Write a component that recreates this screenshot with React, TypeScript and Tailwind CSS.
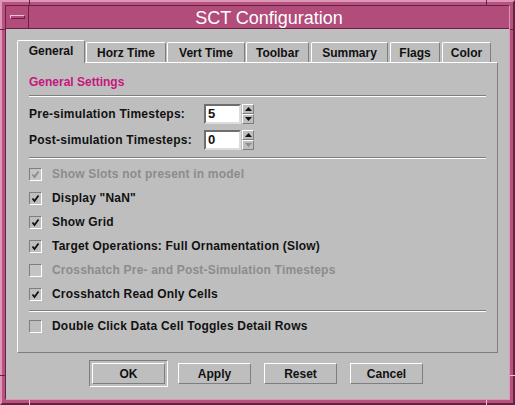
import React from "react";

const tabs = [
  { label: "General", w: "w-[68px]", ml: "" },
  { label: "Horz Time", w: "w-[80px]", ml: "ml-[1px]" },
  { label: "Vert Time", w: "w-[78px]", ml: "ml-[1px]" },
  { label: "Toolbar", w: "w-[63px]", ml: "ml-[1px]" },
  { label: "Summary", w: "w-[77px]", ml: "ml-[2px]" },
  { label: "Flags", w: "w-[50px]", ml: "ml-[2px]" },
  { label: "Color", w: "w-[49px]", ml: "ml-[2px]" },
];

const options = [
  { label: "Show Slots not present in model", checked: true, disabled: true },
  { label: 'Display "NaN"', checked: true },
  { label: "Show Grid", checked: true },
  { label: "Target Operations: Full Ornamentation (Slow)", checked: true },
  { label: "Crosshatch Pre- and Post-Simulation Timesteps", checked: false, disabled: true },
  { label: "Crosshatch Read Only Cells", checked: true },
];

function Separator() {
  return <div className="h-[2px] w-[457px] border-t border-t-[#7e7e7e] border-b border-b-white" />;
}

function Checkbox({ checked, disabled }: { checked: boolean; disabled?: boolean }) {
  return (
    <div
      className={
        "w-[13px] h-[13px] border border-t-[#7e7e7e] border-l-[#7e7e7e] border-r-white border-b-white flex items-center justify-center " +
        (disabled ? "bg-[#c4c4c4]" : "bg-[#bebebe]")
      }
    >
      {checked && (
        <svg width="9" height="9" viewBox="0 0 9 9">
          <path d="M1.5 4.5 L3.5 7 L7.5 1.5" fill="none" stroke={disabled ? "#8c8c8c" : "#111"} strokeWidth="1.8" />
        </svg>
      )}
    </div>
  );
}

function Arrow({ up, disabled }: { up?: boolean; disabled?: boolean }) {
  return (
    <div className="h-[10px] w-[12px] border border-t-white border-l-white border-r-[#7e7e7e] border-b-[#7e7e7e] flex items-center justify-center">
      <svg width="7" height="4" viewBox="0 0 7 4">
        <path d={up ? "M3.5 0 L7 4 L0 4 Z" : "M0 0 L7 0 L3.5 4 Z"} fill={disabled ? "#8c8c8c" : "#111"} />
      </svg>
    </div>
  );
}

function Spin({ label, value, downDisabled }: { label: string; value: string; downDisabled?: boolean }) {
  return (
    <div className="flex items-center h-[20px]">
      <div className="w-[175px] tracking-[0.25px]">{label}</div>
      <div className="w-[37px] h-[20px] bg-white border-2 border-t-[#6e6e6e] border-l-[#6e6e6e] border-r-[#dcdcdc] border-b-[#dcdcdc] flex items-center pl-[2px] text-[13px]">
        {value}
      </div>
      <div className="flex flex-col ml-[1px]">
        <Arrow up />
        <Arrow disabled={downDisabled} />
      </div>
    </div>
  );
}

function Button({ label }: { label: string }) {
  return (
    <div className="w-[73px] h-[21px] border border-t-white border-l-white border-r-[#7e7e7e] border-b-[#7e7e7e] flex items-center justify-center">
      {label}
    </div>
  );
}

export default function App() {
  return (
    <div
      className="relative w-[515px] h-[405px] bg-[#b8527f] border-2 border-t-[#dd98b8] border-l-[#dd98b8] border-r-[#6a1f44] border-b-[#6a1f44] p-[3px] text-[12px] font-bold text-[#111]"
      style={{ fontFamily: '"Liberation Sans", Arial, sans-serif' }}
    >
      {/* resize handle ticks */}
      <div className="absolute top-[-2px] left-[27px] w-[1px] h-[5px] bg-[#6a1f44]" />
      <div className="absolute top-[-2px] left-[484px] w-[1px] h-[5px] bg-[#6a1f44]" />
      <div className="absolute bottom-[-2px] left-[27px] w-[1px] h-[5px] bg-[#f0c4d8]" />
      <div className="absolute bottom-[-2px] left-[484px] w-[1px] h-[5px] bg-[#f0c4d8]" />
      <div className="absolute left-[-2px] top-[27px] h-[1px] w-[5px] bg-[#6a1f44]" />
      <div className="absolute left-[-2px] top-[373px] h-[1px] w-[5px] bg-[#6a1f44]" />
      <div className="absolute right-[-2px] top-[27px] h-[1px] w-[5px] bg-[#6a1f44]" />
      <div className="absolute right-[-2px] top-[373px] h-[1px] w-[5px] bg-[#f0c4d8]" />

      <div className="w-full h-full border border-t-[#6a1f44] border-l-[#6a1f44] border-r-[#dd98b8] border-b-[#dd98b8] flex flex-col">
        {/* title bar */}
        <div className="h-[23px] flex border-b border-b-[#6a1f44] bg-[#b24c7a]">
          <div className="w-[23px] h-full border-r border-r-[#6a1f44] flex items-center justify-center">
            <div className="w-[15px] h-[4px] border-t border-t-[#f0c4d8] border-b border-b-[#6a1f44] border-l border-l-[#f0c4d8] border-r border-r-[#6a1f44]" />
          </div>
          <div className="flex-1 flex items-center justify-center text-white font-normal text-[18px] leading-none pt-[1px]">
            SCT Configuration
          </div>
        </div>

        {/* content */}
        <div className="flex-1 bg-[#bebebe] pt-[11px] pl-[11px]">
          <div className="flex items-end h-[22px]">
            {tabs.map((t, i) => (
              <div
                key={t.label}
                className={
                  t.w +
                  " " +
                  t.ml +
                  " flex items-center justify-center rounded-t-[2px] border-t border-l border-t-white border-l-white border-r border-r-[#7e7e7e] " +
                  (i === 0 ? "h-[23px] relative z-10 -mb-px bg-[#bebebe] pb-[2px]" : "h-[20px] pt-[1px]")
                }
              >
                {t.label}
              </div>
            ))}
          </div>

          <div className="w-[481px] h-[291px] border border-t-white border-l-white border-r-[#7e7e7e] border-b-[#7e7e7e] pt-[11px] pl-[11px] flex flex-col">
            <div className="h-[16px] flex items-center text-[#c8157f]">General Settings</div>
            <div className="mt-[5px]">
              <Separator />
            </div>
            <div className="mt-[7px]">
              <Spin label="Pre-simulation Timesteps:" value="5" />
            </div>
            <div className="mt-[6px]">
              <Spin label="Post-simulation Timesteps:" value="0" downDisabled />
            </div>
            <div className="mt-[7px]">
              <Separator />
            </div>
            <div className="mt-[3px] flex flex-col">
              {options.map((o) => (
                <div key={o.label} className="h-[24px] flex items-center">
                  <Checkbox checked={o.checked} disabled={o.disabled} />
                  <span className={"ml-[10px] tracking-[0.2px] " + (o.disabled ? "text-[#8c8c8c]" : "")}>{o.label}</span>
                </div>
              ))}
            </div>
            <div className="mt-[4px]">
              <Separator />
            </div>
            <div className="mt-[2px] h-[24px] flex items-center">
              <Checkbox checked={false} />
              <span className="ml-[10px] tracking-[0.2px]">Double Click Data Cell Toggles Detail Rows</span>
            </div>
          </div>

          <div className="mt-[7px] flex items-center pl-[72px]">
            <div className="w-[79px] h-[27px] border border-t-[#7e7e7e] border-l-[#7e7e7e] border-r-white border-b-white flex items-center justify-center">
              <Button label="OK" />
            </div>
            <div className="ml-[10px]">
              <Button label="Apply" />
            </div>
            <div className="ml-[13px]">
              <Button label="Reset" />
            </div>
            <div className="ml-[13px]">
              <Button label="Cancel" />
            </div>
          </div>
        </div>
      </div>
    </div>
  );
}
